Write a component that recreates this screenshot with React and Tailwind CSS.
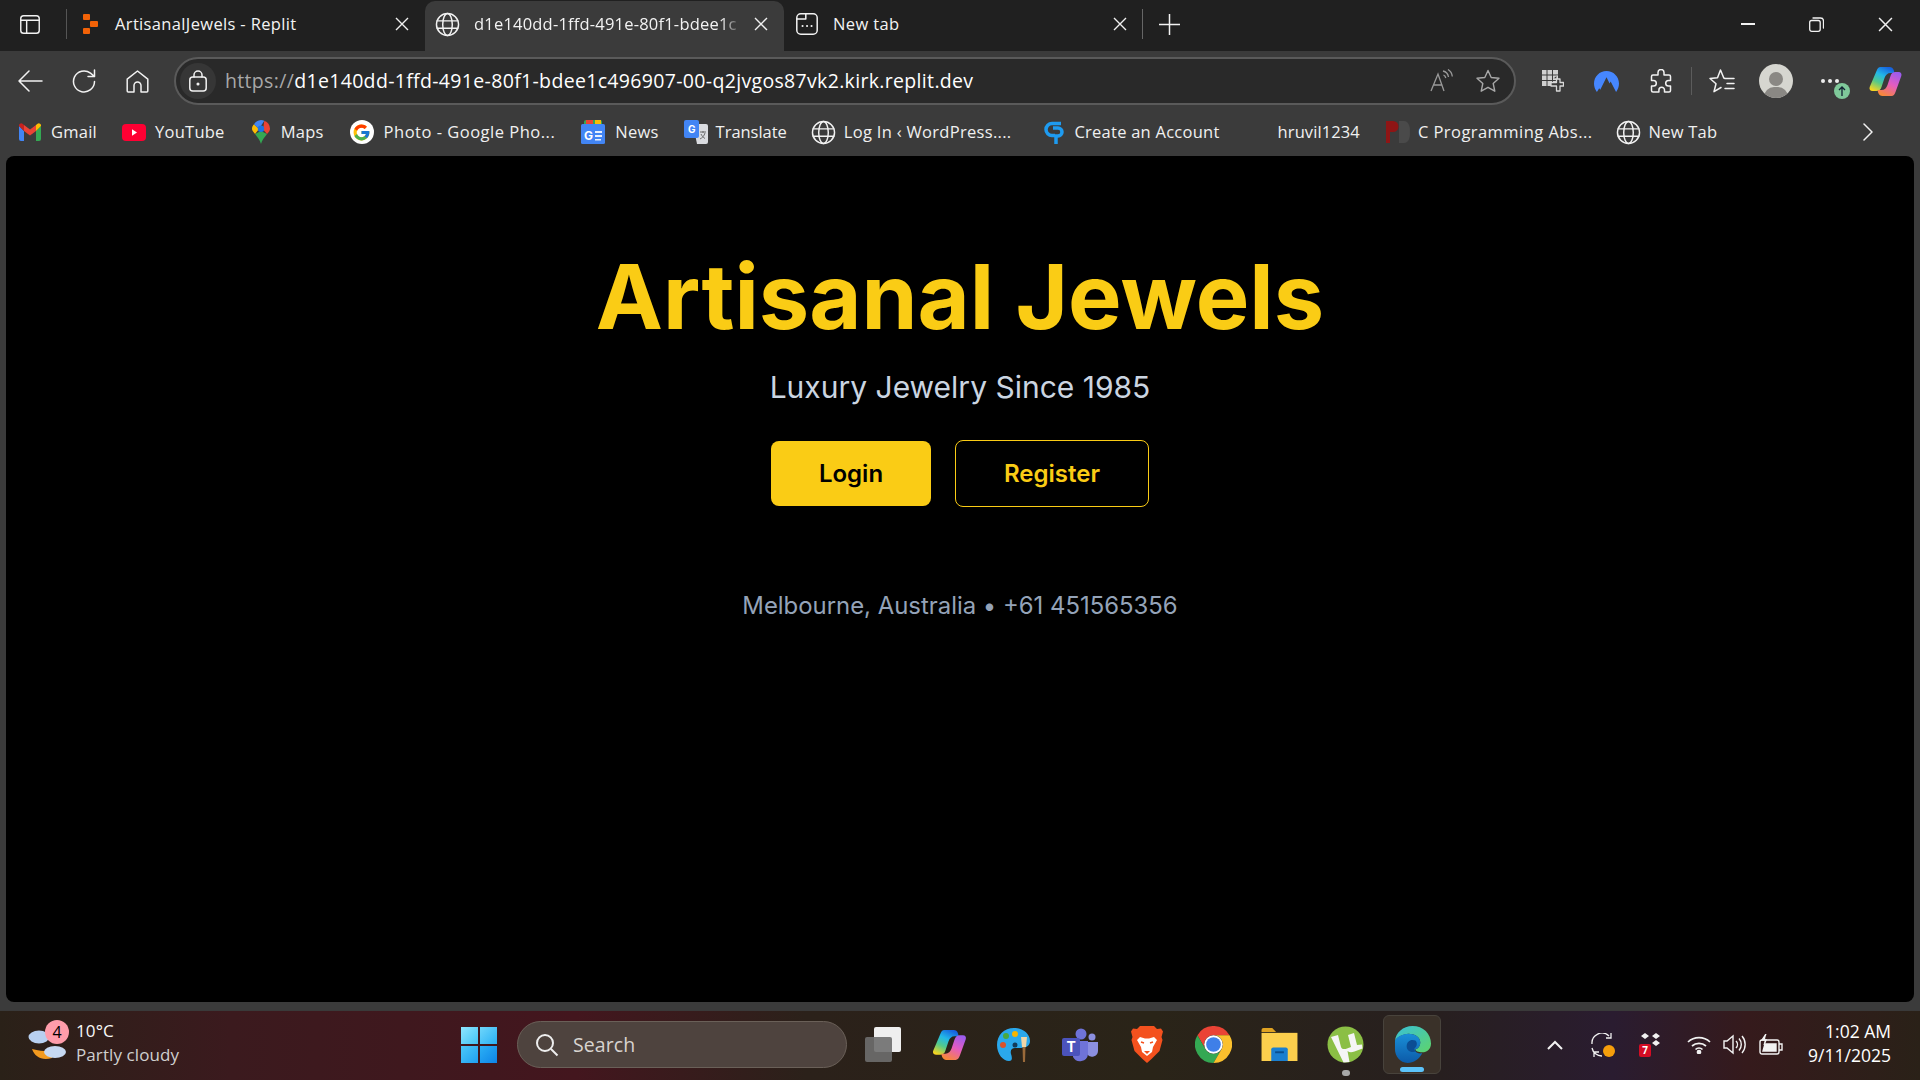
import React from "react";
import { FcGoogle } from "react-icons/fc";

const ui = { fontFamily: '"Open Sans","Noto Sans",sans-serif' };
const inter = { fontFamily: 'Inter,sans-serif' };

const Globe = ({ s = 24 }) => (
  <svg width={s} height={s} viewBox="0 0 24 24" fill="none" stroke="#f2f2f2" strokeWidth="1.4">
    <circle cx="12" cy="12" r="10.6" />
    <ellipse cx="12" cy="12" rx="4.6" ry="10.6" />
    <path d="M1.6 8.5h20.8M1.6 15.5h20.8" />
  </svg>
);
const Close = ({ s = 14 }) => (
  <svg width={s} height={s} viewBox="0 0 14 14" stroke="#f0f0f0" strokeWidth="1.4"><path d="M1 1l12 12M13 1L1 13" /></svg>
);
const ReplitIcon = () => (
  <svg width="15" height="20" viewBox="0 0 15 20" fill="#f26207">
    <rect x="0" y="0" width="7" height="6" rx="1" /><rect x="7" y="7" width="8" height="6" rx="1" /><rect x="0" y="14" width="7" height="6" rx="1" />
  </svg>
);
const Gmail = () => (
  <svg width="22" height="18" viewBox="0 0 22 18">
    <path d="M0 3v13a2 2 0 002 2h3V8z" fill="#4285f4" />
    <path d="M22 3v13a2 2 0 01-2 2h-3V8z" fill="#34a853" />
    <path d="M5 8l6 4.5L17 8V2l-6 4.5L5 2z" fill="#ea4335" />
    <path d="M0 3l5 5V2L3.500.8A2.200 2.200 0 000 3z" fill="#c5221f" />
    <path d="M22 3l-5 5V2l1.500-1.200A2.200 2.200 0 0122 3z" fill="#fbbc04" />
  </svg>
);
const YouTube = () => (
  <svg width="24" height="17" viewBox="0 0 24 17"><rect width="24" height="17" rx="4" fill="#ff0033" /><path d="M10 5.200l5 3.300-5 3.300z" fill="#fff" /></svg>
);
const Maps = () => (
  <svg width="18" height="24" viewBox="0 0 18 24">
    <path d="M9 24c-1-4-3.500-6.500-6-10l6-3 6 3c-2.500 3.500-5 6-6 10z" fill="#34a853" />
    <path d="M3 14C1 11.500 0 10.500 0 8.800 0 7 .8 5.500 2 4.300l5 4.700z" fill="#fbbc04" />
    <path d="M2 4.300A9 9 0 019 0c1.200 0 2.300.3 3.300.8L7 9z" fill="#4285f4" />
    <path d="M12.300.8A9 9 0 0118 8.800c0 1.700-1 3.200-3 5.200L11 9.500z" fill="#ea4335" />
    <circle cx="9" cy="8.800" r="3.200" fill="#1a73e8" />
  </svg>
);
const GoogleBadge = () => (
  <span className="flex h-[24px] w-[24px] items-center justify-center rounded-full bg-white"><FcGoogle size={19} /></span>
);
const NewsIcon = () => (
  <svg width="24" height="24" viewBox="0 0 24 24">
    <rect x="3" y="0" width="18" height="8" rx="2" fill="#34a853" />
    <rect x="5" y="0" width="7" height="5" fill="#ea4335" />
    <rect x="14" y="0" width="6" height="5" fill="#fbbc04" />
    <rect x="0" y="4" width="24" height="20" rx="1.500" fill="#4285f4" />
    <text x="3" y="20" fontSize="12" fontWeight="700" fill="#fff" fontFamily="Inter">G</text>
    <path d="M14 11h7v2h-7zM14 15h7v2h-7zM14 19h6v1.500h-6z" fill="#e8f0fe" />
  </svg>
);
const TranslateIcon = () => (
  <svg width="24" height="24" viewBox="0 0 24 24">
    <path d="M9 4h13a2 2 0 012 2v16a2 2 0 01-2 2H13z" fill="#dadce0" />
    <rect x="0" y="0" width="15" height="18" rx="2" fill="#4285f4" />
    <text x="4" y="13" fontSize="10" fontWeight="700" fill="#fff" fontFamily="Inter">G</text>
    <path d="M16 12h6M19 11v2M21 13c-.8 3-3 5-5 6M17 14c.8 2 2.500 3.500 4 4.500" stroke="#6b6b6b" strokeWidth="1" fill="none" />
  </svg>
);
const GpIcon = () => (
  <svg width="20" height="26" viewBox="0 0 20 26" fill="none" stroke="#1e9bf0" strokeWidth="3.500">
    <path d="M17 4.500H8a6 6 0 000 12h3" />
    <path d="M9 9h5a4 4 0 010 8h-2v8" />
  </svg>
);
const PdIcon = () => (
  <svg width="26" height="24" viewBox="0 0 26 24">
    <path d="M1 1h7a5 5 0 010 11H5v11H1z" fill="#8f1515" />
    <path d="M14 1h5c4 0 6 4 6 11s-2 11-6 11h-5z" fill="#4a4a4a" />
  </svg>
);
const Copilot = ({ id, w = 34, h = 31 }) => (
  <svg width={w} height={h} viewBox="0 0 33 31">
    <defs>
      <linearGradient id={`${id}a`} x1=".7" y1="0" x2=".2" y2="1">
        <stop offset="0" stopColor="#1763e0" /><stop offset=".35" stopColor="#22b8e8" /><stop offset=".65" stopColor="#54c98a" /><stop offset="1" stopColor="#f7d51f" />
      </linearGradient>
      <linearGradient id={`${id}b`} x1=".8" y1="0" x2=".3" y2="1">
        <stop offset="0" stopColor="#9a5cf0" /><stop offset=".5" stopColor="#e45cc0" /><stop offset="1" stopColor="#f8873a" />
      </linearGradient>
    </defs>
    <path d="M11 1h9c2 0 3.500 1 4.200 3l.8 3h-4c-3 0-5 2-6 5l-3 9c-.7 2.500-2.500 4-5 4H3c-2.500 0-3.500-2-2.800-4L7 5c1-2.500 2-4 4-4z" fill={`url(#${id}a)`} />
    <path d="M22 30h-9c-2 0-3.500-1-4.200-3l-.8-3h4c3 0 5-2 6-5l3-9c.7-2.500 2.500-4 5-4h3c2.500 0 3.500 2 2.800 4L26 26c-1 2.500-2 4-4 4z" fill={`url(#${id}b)`} />
  </svg>
);

const Bookmark = ({ icon, label, cls, track = "" }) => (
  <div className={`flex items-center shrink-0 ${cls}`}>
    {icon}
    <span className={`whitespace-nowrap text-[#f0f0f0] ${track}`}>{label}</span>
  </div>
);

const IconBtn = ({ cls, children }) => <div className={`flex shrink-0 items-center justify-center ${cls}`}>{children}</div>;

const s = { fill: "none", stroke: "#f2f2f2", strokeWidth: 1.5, strokeLinecap: "round", strokeLinejoin: "round" };

function TabStrip() {
  return (
    <div className="flex h-[51px] items-center bg-[#202020] pb-[3px] text-[16.500px] tracking-[0.35px] text-[#f3f3f3]">
      <IconBtn cls="ml-[20px] w-[20px]">
        <svg width="21" height="21" viewBox="0 0 21 20" {...s}>
          <rect x=".8" y=".8" width="19.400" height="18.400" rx="3" /><path d="M.8 5.500h19.400M7 5.500v13.700" />
        </svg>
      </IconBtn>
      <div className="ml-[26px] h-[30px] w-px bg-[#555]" />
      <div className="flex w-[358px] items-center pl-[16px] pr-[16px]">
        <ReplitIcon />
        <span className="ml-[17px] flex-1 whitespace-nowrap">ArtisanalJewels - Replit</span>
        <Close />
      </div>
      <div className="mb-[-3px] flex h-[50px] w-[359px] items-center self-end rounded-t-[10px] bg-[#3b3b3b] pb-[4px] pl-[10px] pr-[16px]">
        <Globe s={25} />
        <span className="ml-[14px] w-[268px] overflow-hidden whitespace-nowrap tracking-[0.2px]" style={{ maskImage: "linear-gradient(to right,#000 92%,transparent)" }}>d1e140dd-1ffd-491e-80f1-bdee1c</span>
        <span className="flex-1" />
        <Close />
      </div>
      <div className="flex w-[348px] items-center pl-[12px] pr-[5px]">
        <svg width="22" height="22" viewBox="0 0 22 22" {...s}><rect x=".8" y=".8" width="20.400" height="20.400" rx="4" /><path d="M.8 6h9V.8" /><path d="M6.500 13h.1M11 13h.1M15.500 13h.1" strokeWidth="2" /></svg>
        <span className="ml-[15px] flex-1 whitespace-nowrap">New tab</span>
        <Close />
      </div>
      <div className="ml-[10px] h-[30px] w-px bg-[#666]" />
      <IconBtn cls="ml-[15px] w-[22px]">
        <svg width="21" height="21" viewBox="0 0 21 21" stroke="#f2f2f2" strokeWidth="1.500"><path d="M10.500 0v21M0 10.500h21" /></svg>
      </IconBtn>
      <div className="flex-1" />
      <IconBtn cls="w-[68px]"><div className="h-[2px] w-[14px] bg-[#f2f2f2]" /></IconBtn>
      <IconBtn cls="w-[68px]">
        <svg width="15" height="15" viewBox="0 0 15 15" {...s} strokeWidth="1.300"><rect x=".7" y="3.500" width="10.500" height="10.800" rx="2" /><path d="M4 1h7.500a3 3 0 013 3v7" /></svg>
      </IconBtn>
      <IconBtn cls="w-[70px]"><Close s={15} /></IconBtn>
    </div>
  );
}

function AddressRow() {
  return (
    <div className="flex h-[58px] items-center pt-[2px]">
      <IconBtn cls="ml-[17px] w-[26px]">
        <svg width="25" height="22" viewBox="0 0 25 22" {...s}><path d="M24 11H1M11 1L1 11l10 10" /></svg>
      </IconBtn>
      <IconBtn cls="ml-[28px] w-[26px]">
        <svg width="25" height="25" viewBox="0 0 25 25" {...s}><path d="M22.500 12.500A10.500 10.500 0 1118.500 4.200L22.500 7.500M22.500 1v6.500H16" /></svg>
      </IconBtn>
      <IconBtn cls="ml-[28px] w-[24px]">
        <svg width="23" height="23" viewBox="0 0 23 23" {...s}><path d="M1.200 21V9.200L11.500 1l10.300 8.200V21a1 1 0 01-1 1H15v-6.500a3.500 3.500 0 00-7 0V22H2.200a1 1 0 01-1-1z" /></svg>
      </IconBtn>
      <div className="ml-[25px] flex h-[48px] w-[1342px] items-center rounded-full border-2 border-[#5a5a5a] bg-[#292929] pl-[4px] pr-[14px]">
        <div className="flex h-[36px] w-[36px] shrink-0 items-center justify-center rounded-full bg-[#363636]">
          <svg width="18" height="22" viewBox="0 0 18 22" {...s}><rect x=".8" y="7" width="16.400" height="14" rx="3" /><path d="M5 7V5a4 4 0 018 0v2" /><circle cx="9" cy="14" r=".8" fill="#f2f2f2" /></svg>
        </div>
        <span className="ml-[9px] whitespace-nowrap text-[19.500px] tracking-[0.33px] text-[#a8a8a8]">https://<span className="text-white">d1e140dd-1ffd-491e-80f1-bdee1c496907-00-q2jvgos87vk2.kirk.replit.dev</span></span>
        <div className="flex-1" />
        <svg width="24" height="24" viewBox="0 0 24 24" fill="none" stroke="#9a9a9a" strokeWidth="1.300"><path d="M2 22L9 5l6 17M4.500 16h9" /><path d="M14 2c3 .7 5 3 5.500 6M14.500 6c1.400.5 2 1.500 2.300 3M19 .5c2.500 1.500 4 4 4.300 7" /></svg>
        <svg className="ml-[23px]" width="24" height="24" viewBox="0 0 24 24" fill="none" stroke="#a8a8a8" strokeWidth="1.400" strokeLinejoin="round"><path d="M12 1.500l3.200 7 7.800.8-5.800 5.200 1.600 7.700-6.800-3.900-6.800 3.900 1.600-7.700L1 9.300l7.800-.8z" /></svg>
      </div>
      <IconBtn cls="ml-[25px] w-[24px]">
        <svg width="22" height="22" viewBox="0 0 22 22">
          <rect x="0" y="0" width="16" height="16" fill="#cfcfcf" />
          <path d="M0 5h16M0 10.500h16M5 0v16M10.500 0v16" stroke="#3b3b3b" strokeWidth="1" />
          <path d="M11 9h4V5.500h0M15 9h3v3.500h3.500v3.500H18v5h-3.500v-5H9v-3.500h5.500V9z" fill="#3b3b3b" stroke="#d8d8d8" strokeWidth="1.300" strokeLinejoin="round" />
        </svg>
      </IconBtn>
      <IconBtn cls="ml-[28px] w-[26px]">
        <svg width="25" height="21" viewBox="0 0 24 20"><path d="M12 0C18.600 0 24 5.300 24 12c0 3-1 5.800-2.800 8L16 10l-1 2-3-6-6 12-1-1.500L2.800 20C1 17.800 0 15 0 12 0 5.300 5.400 0 12 0z" fill="#4687ff" /></svg>
      </IconBtn>
      <IconBtn cls="ml-[30px] w-[24px]">
        <svg width="24" height="25" viewBox="0 0 24 25" {...s}><path d="M9 3.500a3 3 0 016 0V6h5a1.500 1.500 0 011.500 1.500v4h-2a2.800 2.800 0 000 5.600h2v4.400A1.500 1.500 0 0120 23h-4.500v-2a2.800 2.800 0 00-5.600 0v2H4a1.500 1.500 0 01-1.500-1.500V17H4.500a2.800 2.800 0 000-5.600H2.500V7.500A1.500 1.500 0 014 6h5z" /></svg>
      </IconBtn>
      <div className="ml-[18px] h-[28px] w-px bg-[#5c5c5c]" />
      <IconBtn cls="ml-[17px] w-[26px]">
        <svg width="26" height="25" viewBox="0 0 26 25" {...s}><path d="M16 9.500L14.800 9 11.500 1 8.500 8.800 1 9.500l6 5.200-2 8 7-4.200" /><path d="M16.500 9.500H25M18 14.500h7M16 19.500h9" /></svg>
      </IconBtn>
      <div className="ml-[24px] flex h-[34px] w-[34px] shrink-0 items-end justify-center overflow-hidden rounded-full bg-[#d6d6d0]">
        <div className="relative h-[26px] w-[26px]">
          <div className="absolute left-[6px] top-0 h-[14px] w-[14px] rounded-full bg-[#8a8884]" />
          <div className="absolute left-[1px] top-[15px] h-[20px] w-[24px] rounded-full bg-[#8a8884]" />
        </div>
      </div>
      <div className="relative ml-[28px] flex h-[30px] w-[30px] shrink-0 items-center">
        <span className="h-[4px] w-[4px] rounded-full bg-[#eee]" />
        <span className="ml-[3px] h-[4px] w-[4px] rounded-full bg-[#eee]" />
        <span className="ml-[3px] h-[4px] w-[4px] rounded-full bg-[#eee]" />
        <div className="absolute left-[13px] top-[17px] flex h-[16px] w-[16px] items-center justify-center rounded-full bg-[#7fc99a]">
          <svg width="10" height="12" viewBox="0 0 10 12" stroke="#123" strokeWidth="1.300" fill="none"><path d="M5 11V2M2 5l3-3 3 3" /></svg>
        </div>
      </div>
      <IconBtn cls="ml-[18px] w-[34px]"><Copilot id="cp1" /></IconBtn>
    </div>
  );
}

function Bookmarks() {
  return (
    <div className="flex h-[46px] items-center text-[16.500px] tracking-[0.25px]">
      <Bookmark cls="ml-[19px] gap-[10px]" icon={<Gmail />} label="Gmail" />
      <Bookmark cls="ml-[25px] gap-[9px]" icon={<YouTube />} label="YouTube" />
      <Bookmark cls="ml-[27px] gap-[11px]" icon={<Maps />} label="Maps" />
      <Bookmark cls="ml-[26px] gap-[10px]" icon={<GoogleBadge />} label="Photo - Google Pho..." track="tracking-[0.5px]" />
      <Bookmark cls="ml-[26px] gap-[10px]" icon={<NewsIcon />} label="News" />
      <Bookmark cls="ml-[25px] gap-[8px]" icon={<TranslateIcon />} label="Translate" track="tracking-[-0.03px]" />
      <Bookmark cls="ml-[24px] gap-[8px]" icon={<Globe s={25} />} label="Log In ‹ WordPress...." track="tracking-[0.3px]" />
      <Bookmark cls="ml-[33px] gap-[10px]" icon={<GpIcon />} label="Create an Account" />
      <Bookmark cls="ml-[58px]" icon={null} label="hruvil1234" track="tracking-[0.1px]" />
      <Bookmark cls="ml-[25px] gap-[7px]" icon={<PdIcon />} label="C Programming Abs..." track="tracking-[0.45px]" />
      <Bookmark cls="ml-[23px] gap-[8px]" icon={<Globe s={25} />} label="New Tab" />
      <div className="flex-1" />
      <svg className="mr-[46px]" width="12" height="18" viewBox="0 0 12 18" {...s}><path d="M2 1l8 8-8 8" /></svg>
    </div>
  );
}

function Page() {
  return (
    <div className="mx-[6px] flex h-[846px] flex-col items-center rounded-[8px] bg-black pt-[96px]" style={inter}>
      <h1 className="text-[90px] font-bold leading-none text-[#facc15]">Artisanal Jewels</h1>
      <p className="mt-[27px] text-[30px] leading-[36px] text-[#cbd5e1]">Luxury Jewelry Since 1985</p>
      <div className="mt-[35px] flex items-center gap-[24px]">
        <button className="h-[65px] w-[160px] rounded-[8px] bg-[#facc15] text-[24px] font-semibold text-black">Login</button>
        <button className="h-[67px] w-[194px] rounded-[8px] border border-[#facc15] text-[24px] font-semibold text-[#facc15]">Register</button>
      </div>
      <p className="mt-[83px] text-[23.900px] leading-[32px] text-[#94a3b8]">Melbourne, Australia • +61 451565356</p>
    </div>
  );
}

function Taskbar() {
  return (
    <div className="flex h-[70px] items-center border-t border-[#3a3a3a] bg-[linear-gradient(90deg,#2a2118_0%,#3b1a1e_12%,#43161e_30%,#2b211a_42%,#2a2418_60%,#271f1f_75%,#2a1c30_84%,#351a1c_91%,#2a2118_100%)] pb-[2px]" style={ui}>
      <div className="relative ml-[28px] h-[44px] w-[42px] shrink-0">
        <svg width="42" height="44" viewBox="0 0 42 44">
          <path d="M4 26c3 8 10 12 20 9l3-9c-3 3-10 3-23 0z" fill="#f29a1f" />
          <ellipse cx="11" cy="14" rx="10.500" ry="6.500" fill="#b8d0f0" />
          <ellipse cx="27" cy="29" rx="11" ry="6" fill="#c7d9f2" />
        </svg>
        <div className="absolute left-[17px] top-[-3px] flex h-[24px] w-[24px] items-center justify-center rounded-full bg-[#ff9dab] text-[16px] text-black">4</div>
      </div>
      <div className="ml-[6px] mt-[-3px] w-[160px] shrink-0 text-[17px] leading-[24px] tracking-[0.1px] text-[#f8f8f8]">
        <div>10°C</div>
        <div className="text-[#cfcfcf]">Partly cloudy</div>
      </div>
      <div className="ml-[225px] grid h-[36px] w-[36px] shrink-0 grid-cols-2 gap-[2px]">
        <span className="bg-[linear-gradient(135deg,#8fe6ff,#42c2f5)]" /><span className="bg-[linear-gradient(135deg,#6fd6fb,#2ab0f5)]" />
        <span className="bg-[linear-gradient(135deg,#4cc8f8,#1f9ff0)]" /><span className="bg-[linear-gradient(135deg,#2cb0f5,#0d84e8)]" />
      </div>
      <div className="ml-[20px] flex h-[47px] w-[330px] shrink-0 items-center rounded-full border border-[#6a6058] bg-[#4e433e] pl-[17px]">
        <svg width="24" height="24" viewBox="0 0 24 24" fill="none" stroke="#eee" strokeWidth="2"><circle cx="10" cy="10" r="8" /><path d="M16 16l6.500 6.500" /></svg>
        <span className="ml-[14px] text-[19.500px] tracking-[0.1px] text-[#d8d4d0]">Search</span>
      </div>
      <div className="relative ml-[18px] h-[35px] w-[36px] shrink-0">
        <div className="absolute right-0 top-0 h-[25px] w-[27px] rounded-[2px] bg-[#efefef]" />
        <div className="absolute bottom-0 left-0 h-[25px] w-[27px] rounded-[2px] bg-[#6e6e6e]/90" />
      </div>
      <IconBtn cls="ml-[31px] w-[36px]"><Copilot id="cp2" w={34} h={32} /></IconBtn>
      <IconBtn cls="ml-[29px] w-[36px]">
        <svg width="36" height="36" viewBox="0 0 36 36">
          <path d="M17 1C7 1 0 8 0 18c0 9 6 16 12 16 4 0 3-4 2-7-1-4 1-6 4-6h6c6 0 9-3 9-7C33 7 26 1 17 1z" fill="#2aa8ec" />
          <circle cx="6" cy="18" r="3" fill="#d9532c" /><circle cx="9" cy="9" r="3" fill="#4aa83d" /><circle cx="18" cy="7" r="3" fill="#f7b500" /><circle cx="18" cy="18" r="2.500" fill="#123a5a" />
          <path d="M24 10h6l-1 10h-4z" fill="#f0d6a8" /><path d="M25.500 20h3l-.5 15h-2z" fill="#9a6a3a" />
        </svg>
      </IconBtn>
      <IconBtn cls="ml-[29px] w-[36px]">
        <svg width="36" height="34" viewBox="0 0 36 34">
          <circle cx="19" cy="6" r="5.500" fill="#6f73d8" /><circle cx="30" cy="9" r="3.500" fill="#8b8fe0" />
          <path d="M25 14h11v9a6 6 0 01-11 3z" fill="#8b8fe0" />
          <path d="M11 13h15v13a8 8 0 01-15 3z" fill="#6f73d8" />
          <rect x="0" y="10" width="18" height="18" rx="2" fill="#4b53bc" />
          <text x="4.500" y="24" fontSize="14" fontWeight="700" fill="#fff" fontFamily="Inter">T</text>
        </svg>
      </IconBtn>
      <IconBtn cls="ml-[31px] w-[36px]">
        <svg width="32" height="37" viewBox="0 0 32 37">
          <path d="M9 0h14l3 3 4-.5 2 3L30.500 11l1 3-3 11-8 8-4.500 4-4.500-4-8-8-3-11 1-3L0 5.500l2-3 4 .5z" fill="#f4511e" />
          <path d="M9 11l5 1.500h4l5-1.500 3 3-4 7-1 5-5 4-5-4-1-5-4-7z" fill="#fff" />
          <path d="M13 25h6l-3 3z" fill="#f4511e" />
          <path d="M10 16l3 1M22 16l-3 1" stroke="#f4511e" strokeWidth="1.500" />
        </svg>
      </IconBtn>
      <IconBtn cls="ml-[30px] w-[37px]">
        <svg width="37" height="37" viewBox="0 0 48 48">
          <path d="M3.200 12A24 24 0 0144.800 12H24a12 12 0 00-10.400 18z" fill="#ea4335" />
          <path d="M3.200 12A24 24 0 0024 48l10.400-18a12 12 0 01-20.800 0z" fill="#34a853" />
          <path d="M44.800 12H24a12 12 0 0110.400 18L24 48A24 24 0 0044.800 12z" fill="#fbc02d" />
          <circle cx="24" cy="24" r="12" fill="#fff" /><circle cx="24" cy="24" r="9.500" fill="#3f7fe8" />
        </svg>
      </IconBtn>
      <IconBtn cls="ml-[29px] w-[37px]">
        <svg width="37" height="33" viewBox="0 0 37 34">
          <path d="M0 2a2 2 0 012-2h9l4 4h-15z" fill="#e0a322" />
          <rect x="0" y="5" width="37" height="29" fill="#fccf4d" />
          <path d="M10 22a2 2 0 012-2h13a2 2 0 012 2v12H10z" fill="#1a7fd0" />
          <rect x="14" y="24" width="9" height="2" fill="#0a4f8f" />
        </svg>
      </IconBtn>
      <div className="relative ml-[29px] flex w-[37px] shrink-0 justify-center">
        <svg width="37" height="37" viewBox="0 0 37 37">
          <circle cx="18.500" cy="18.500" r="18" fill="#8bbf45" />
          <path d="M4 11l7-2 3 12c.8 2.500 4 2.500 6 1.500l4-1.500-3-12 6-2 3 12 5-.5.500 4-8 3c-3 1-5 1-7-.5l2 11-6 .5z" fill="#f5f5f5" />
        </svg>
        <span className="absolute bottom-[-13px] h-[6px] w-[8px] rounded-full bg-[#a8a8a8]" />
      </div>
      <div className="relative ml-[19px] flex h-[59px] w-[58px] shrink-0 items-center justify-center rounded-[6px] border border-[#48433c] bg-[#3a3129]">
        <svg width="37" height="37" viewBox="0 0 38 38">
          <defs>
            <linearGradient id="edg" x1="0" y1="0" x2="1" y2="1"><stop offset="0" stopColor="#39c0d8" /><stop offset="1" stopColor="#5ed46a" /></linearGradient>
            <linearGradient id="edb" x1="0" y1="0" x2="0" y2="1"><stop offset="0" stopColor="#1a8fd8" /><stop offset="1" stopColor="#0c5aa8" /></linearGradient>
          </defs>
          <path d="M19 0c11 0 19 8 19 18 0 6-4 9-9 9-4 0-7-1-7-3 3-1 5-3 5-7 0-6-6-9-12-9C9 8 3 12 1 15 2 7 9 0 19 0z" fill="url(#edg)" />
          <path d="M1 15c2-4 8-7 14-7 6 0 12 3 12 9 0 4-2 6-5 7-1 1 0 5 7 4-3 6-9 10-15 10-8 0-13-7-13-14 0-3 0-6 0-9z" fill="url(#edb)" />
          <path d="M13 21c0-6 5-8 9-6 2 2 2 5 0 7-2 1-1 3 1 4-4 2-10 0-10-5z" fill="#0b4d94" />
        </svg>
        <span className="absolute bottom-px h-[5px] w-[24px] rounded-full bg-[#5cc3fa]" />
      </div>
      <div className="flex-1" />
      <svg width="16" height="10" viewBox="0 0 16 10" fill="none" stroke="#f2f2f2" strokeWidth="2"><path d="M1 9l7-7 7 7" /></svg>
      <div className="relative ml-[28px] h-[24px] w-[24px] shrink-0">
        <svg width="24" height="24" viewBox="0 0 24 24" fill="none" stroke="#f2f2f2" strokeWidth="1.300"><path d="M1 11A10 10 0 0118 3M20 0v5h-5M11 23A10 10 0 011 15M3 24v-5h5" /></svg>
        <div className="absolute bottom-0 right-0 h-[12px] w-[12px] rounded-full bg-[#f59e0b]" />
      </div>
      <div className="relative ml-[24px] h-[24px] w-[23px] shrink-0">
        <svg width="23" height="24" viewBox="0 0 23 24" fill="#f2f2f2"><path d="M6 0l4 3-4 3-4-3zM17 0l4 3-4 3-4-3zM17 7l4 3-4 3-4-3z" /></svg>
        <div className="absolute bottom-0 left-0 flex h-[13px] w-[12px] items-center justify-center rounded-[2px] bg-[#d40c24] text-[10px] font-bold text-white">7</div>
      </div>
      <svg className="ml-[25px]" width="24" height="18" viewBox="0 0 24 18" fill="none" stroke="#f2f2f2" strokeWidth="1.700"><path d="M1 6a16 16 0 0122 0M5 10a10.500 10.500 0 0114 0" /><path d="M8.500 13.500a5 5 0 017 0" /><circle cx="12" cy="16" r="1.500" fill="#f2f2f2" /></svg>
      <svg className="ml-[12px]" width="24" height="21" viewBox="0 0 24 21" fill="none" stroke="#f2f2f2" strokeWidth="1.400"><path d="M1 7h3l6-5v17l-6-5H1z" /><path d="M13 7a5 5 0 010 7M16 4.500a9 9 0 010 12M19 2a13 13 0 010 17" /></svg>
      <svg className="ml-[12px]" width="24" height="22" viewBox="0 0 24 22" fill="none" stroke="#f2f2f2" strokeWidth="1.400"><rect x="1" y="6" width="19" height="14" rx="2" /><path d="M20 10h3v6h-3" /><path d="M6 10h11v7H4z" fill="#f2f2f2" /><path d="M7 0L3 6h4l-2 5" fill="#f2f2f2" /></svg>
      <div className="ml-[18px] mr-[29px] mt-[-3px] w-[90px] shrink-0 text-right text-[17.500px] leading-[24px] text-white">
        <div>1:02 AM</div>
        <div>9/11/2025</div>
      </div>
    </div>
  );
}

export default function App() {
  return (
    <div className="flex h-[1080px] w-[1920px] flex-col overflow-hidden bg-[#3b3b3b]" style={ui}>
      <TabStrip />
      <AddressRow />
      <Bookmarks />
      <div className="mt-px"><Page /></div>
      <div className="flex-1" />
      <Taskbar />
    </div>
  );
}
